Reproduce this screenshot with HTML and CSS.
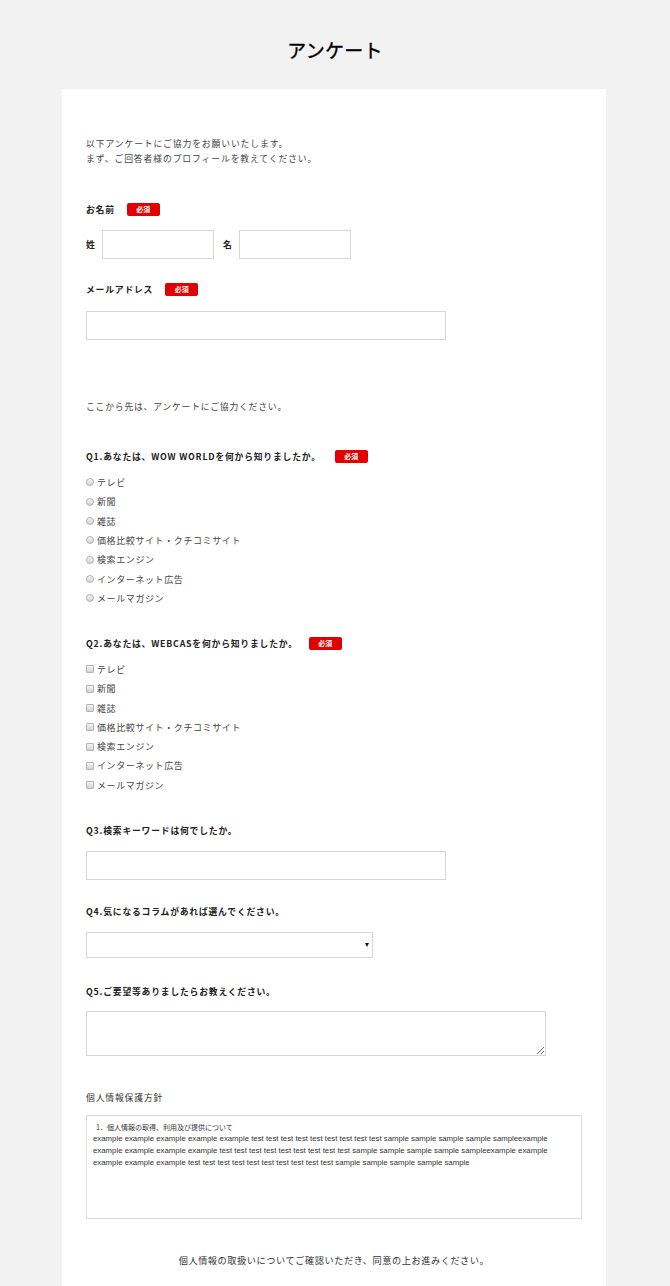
FILE: index.html
```html
<!DOCTYPE html>
<html lang="ja">
<head>
<meta charset="utf-8">
<title>アンケート</title>
<link rel="stylesheet" href="styles.css">
</head>
<body>
<h1 class="page-title">アンケート</h1>
<main class="card">
  <p class="intro">以下アンケートにご協力をお願いいたします。<br>まず、ご回答者様のプロフィールを教えてください。</p>

  <div class="label g-name">お名前<span class="badge">必須</span></div>
  <div class="name-row">
    <span class="name-label">姓</span><input class="field field-name" type="text">
    <span class="name-label name-label-2">名</span><input class="field field-name" type="text">
  </div>

  <div class="label g-mail">メールアドレス<span class="badge">必須</span></div>
  <input class="field field-wide g-input" type="text">

  <p class="note">ここから先は、アンケートにご協力ください。</p>

  <div class="label g-q1">Q1.あなたは、WOW WORLDを何から知りましたか。<span class="badge badge-q">必須</span></div>
  <ul class="options">
    <li><label><input type="radio" name="q1" class="ctl radio">テレビ</label></li>
    <li><label><input type="radio" name="q1" class="ctl radio">新聞</label></li>
    <li><label><input type="radio" name="q1" class="ctl radio">雑誌</label></li>
    <li><label><input type="radio" name="q1" class="ctl radio">価格比較サイト・クチコミサイト</label></li>
    <li><label><input type="radio" name="q1" class="ctl radio">検索エンジン</label></li>
    <li><label><input type="radio" name="q1" class="ctl radio">インターネット広告</label></li>
    <li><label><input type="radio" name="q1" class="ctl radio">メールマガジン</label></li>
  </ul>

  <div class="label g-q2">Q2.あなたは、WEBCASを何から知りましたか。<span class="badge badge-q2">必須</span></div>
  <ul class="options">
    <li><label><input type="checkbox" class="ctl check">テレビ</label></li>
    <li><label><input type="checkbox" class="ctl check">新聞</label></li>
    <li><label><input type="checkbox" class="ctl check">雑誌</label></li>
    <li><label><input type="checkbox" class="ctl check">価格比較サイト・クチコミサイト</label></li>
    <li><label><input type="checkbox" class="ctl check">検索エンジン</label></li>
    <li><label><input type="checkbox" class="ctl check">インターネット広告</label></li>
    <li><label><input type="checkbox" class="ctl check">メールマガジン</label></li>
  </ul>

  <div class="label g-q2">Q3.検索キーワードは何でしたか。</div>
  <input class="field field-wide g-input" type="text">

  <div class="label g-q4">Q4.気になるコラムがあれば選んでください。</div>
  <div class="select-wrap">
    <select class="field field-select"><option></option></select>
  </div>

  <div class="label g-q5">Q5.ご要望等ありましたらお教えください。</div>
  <textarea class="field field-area"></textarea>

  <div class="plain-label">個人情報保護方針</div>
  <div class="policy">
    <div class="policy-title">1．個人情報の取得、利用及び提供について</div>
    <div class="policy-text">example example example example example test test test test test test test test test sample sample sample sample sampleexample<br>example example example example test test test test test test test test test sample sample sample sample sampleexample example<br>example example example test test test test test test test test test test sample sample sample sample sample</div>
  </div>

  <p class="consent">個人情報の取扱いについてご確認いただき、同意の上お進みください。</p>
</main>
</body>
</html>
```

FILE: styles.css
```css
* { box-sizing: border-box; }

html, body {
  margin: 0;
  padding: 0;
}

body {
  background: #f2f2f2;
  font-family: "Noto Sans CJK JP", "Noto Sans", sans-serif;
  color: #333;
}

.page-title {
  margin: 0;
  padding-top: 38px;
  height: 89px;
  font-size: 19px;
  line-height: 24px;
  font-weight: normal;
  letter-spacing: 0.3px;
  color: #000;
  -webkit-text-stroke: 0.35px #000;
  text-align: center;
}

.card {
  width: 544px;
  margin: 0 0 0 62px;
  background: #fff;
  padding: 46.5px 24px 40px 24px;
}

.intro {
  margin: 0;
  font-size: 8.8px;
  line-height: 15px;
  letter-spacing: 0.9px;
  color: #444;
}

.label {
  font-size: 8.8px;
  line-height: 15px;
  letter-spacing: 0.8px;
  font-weight: bold;
  color: #222;
  display: flex;
  align-items: center;
}

.g-name { margin-top: 36.5px; }
.g-mail { margin-top: 23.5px; }
.g-q1 { margin-top: 35px; }
.g-q2 { margin-top: 27.8px; }
.g-q4 { margin-top: 23.5px; }
.g-q5 { margin-top: 25.5px; }

.badge {
  display: inline-block;
  width: 33px;
  height: 13px;
  margin-left: 12px;
  background: #e00000;
  color: #fff;
  border-radius: 2px;
  font-size: 7px;
  line-height: 13px;
  letter-spacing: 0;
  font-weight: bold;
  text-align: center;
}

.badge-q { margin-left: 14px; }
.badge-q2 { margin-left: 11px; }

.name-row {
  margin-top: 12.5px;
  display: flex;
  align-items: center;
  height: 29px;
}

.name-label {
  font-size: 8.8px;
  font-weight: bold;
  color: #222;
  width: 16px;
}

.name-label-2 { margin-left: 9px; }

.field {
  display: block;
  border: 1px solid #d6d6d6;
  background: #fff;
  border-radius: 0;
  margin: 0;
  padding: 0 6px;
  font-family: inherit;
  font-size: 9px;
  outline: none;
}

.field-name {
  width: 112px;
  height: 29px;
}

.field-wide {
  width: 360px;
  height: 29px;
}

.g-input { margin-top: 13.5px; }

.note {
  margin: 59.5px 0 0 0;
  font-size: 8.8px;
  line-height: 15px;
  letter-spacing: 0.8px;
  color: #444;
}

.options {
  list-style: none;
  margin: 8.8px 0 0 0;
  padding: 0;
}

.options li {
  height: 19.33px;
  display: flex;
  align-items: center;
  font-size: 9px;
  letter-spacing: 0.6px;
  color: #444;
}

.options label {
  display: flex;
  align-items: center;
}

.ctl {
  -webkit-appearance: none;
  appearance: none;
  width: 8px;
  height: 8px;
  margin: 0 3px 0 0;
  border: 1px solid #b3b3b3;
  background: linear-gradient(#f4f4f4, #d4d4d4);
}

.radio { border-radius: 50%; }
.check { border-radius: 1px; }

.select-wrap {
  position: relative;
  width: 287px;
  margin-top: 13.5px;
}

.select-wrap::after {
  content: "";
  position: absolute;
  right: 4px;
  top: 11px;
  border-left: 2.5px solid transparent;
  border-right: 2.5px solid transparent;
  border-top: 4px solid #111;
}

.field-select {
  -webkit-appearance: none;
  appearance: none;
  width: 287px;
  height: 26px;
}

.field-area {
  width: 460px;
  height: 45px;
  margin-top: 12.5px;
  resize: both;
}

.plain-label {
  margin-top: 33.5px;
  font-size: 8.8px;
  line-height: 15px;
  letter-spacing: 0.85px;
  color: #333;
}

.policy {
  margin-top: 10.5px;
  width: 496px;
  height: 104px;
  border: 1px solid #dcdcdc;
  padding: 5px 6px;
  overflow: auto;
}

.policy-title {
  font-size: 7px;
  line-height: 12px;
  color: #333;
  padding-left: 3px;
}

.policy-text {
  font-family: "Liberation Sans", Arial, sans-serif;
  font-size: 7.8px;
  line-height: 12px;
  color: #333;
  white-space: nowrap;
}

.consent {
  margin: 33.5px 0 0 0;
  font-size: 9.2px;
  line-height: 15px;
  letter-spacing: 0.55px;
  color: #333;
  text-align: center;
}
```
